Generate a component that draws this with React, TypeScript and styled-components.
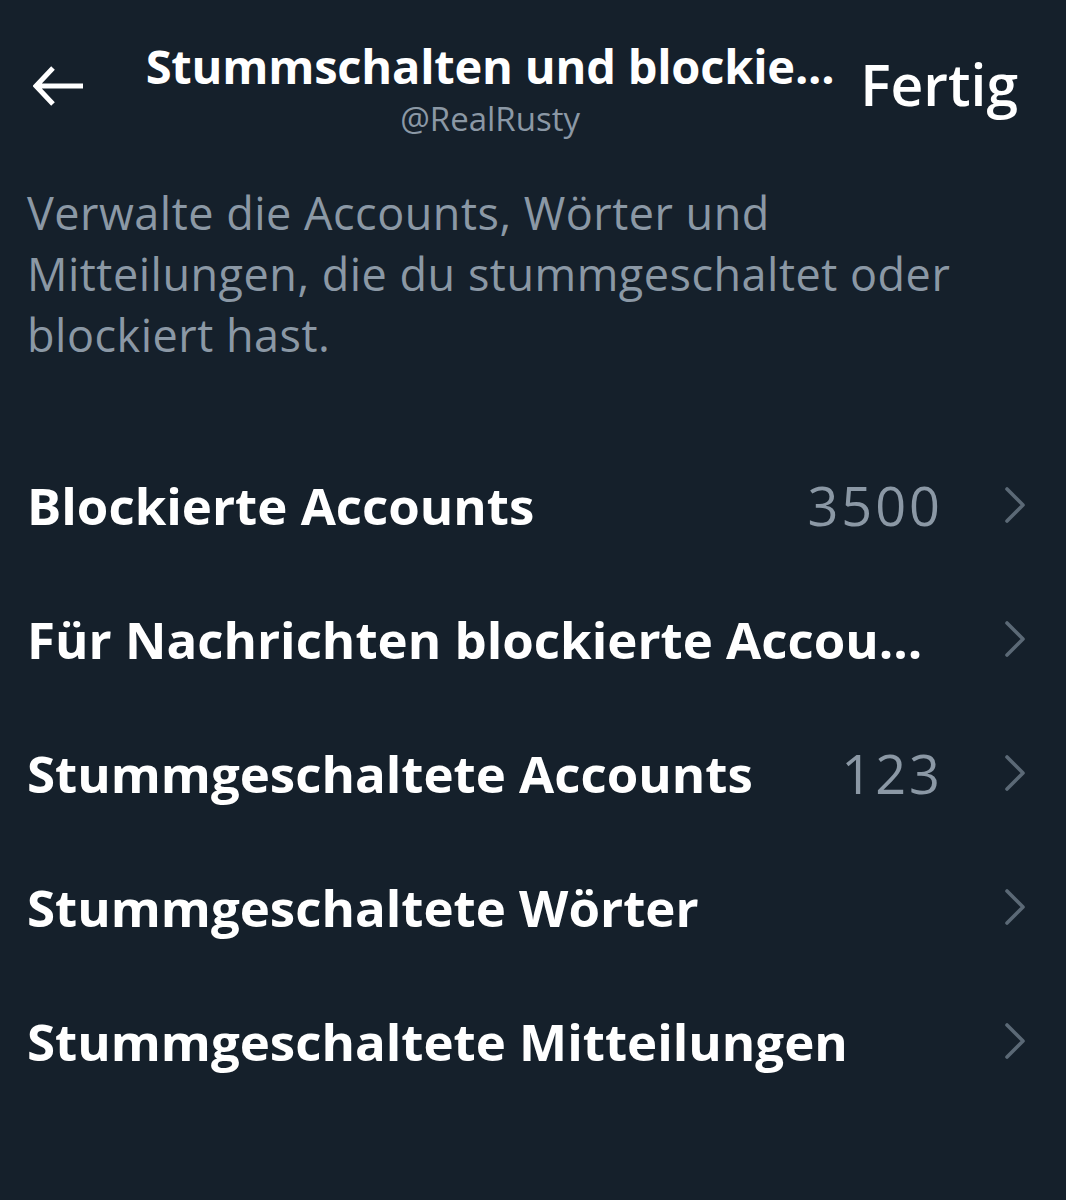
import styled, { createGlobalStyle } from 'styled-components';

const GlobalStyle = createGlobalStyle`
    html, body {
        margin: 0;
        background: #15202b;
    }
    body {
        font-family: "Open Sans", "Noto Sans", sans-serif;
        -webkit-font-smoothing: antialiased;
    }
`;

const Page = styled.div`
    width: 1066px;
    min-height: 1200px;
    background: #15202b;
    color: #ffffff;
`;

const Header = styled.header`
    display: flex;
    align-items: center;
    height: 150px;
    padding: 0 48px 0 33px;
    box-sizing: border-box;
`;

const BackButton = styled.button`
    display: flex;
    align-items: center;
    flex: none;
    width: 114px;
    height: 60px;
    padding: 0;
    margin-top: 22px;
    background: none;
    border: 0;
    color: #ffffff;
`;

const TitleBlock = styled.div`
    flex: 1;
    display: flex;
    flex-direction: column;
    align-items: center;
    gap: 8px;
    min-width: 0;
    margin-top: 28px;
`;

const Title = styled.h1`
    margin: 0;
    font-size: 47px;
    font-weight: 700;
    line-height: 52px;
    letter-spacing: -0.2px;
    white-space: nowrap;
`;

const Handle = styled.div`
    font-size: 33px;
    line-height: 38px;
    color: #8b98a5;
`;

const DoneButton = styled.button`
    flex: none;
    padding: 0;
    margin-top: 18px;
    margin-left: 27px;
    background: none;
    border: 0;
    color: #ffffff;
    font-family: "Open Sans", "Noto Sans", sans-serif;
    font-size: 57px;
    font-weight: 600;
    line-height: 60px;
`;

const Description = styled.p`
    margin: 32px 0 0;
    padding: 0 60px 0 27px;
    font-size: 45px;
    line-height: 61px;
    letter-spacing: 0.5px;
    color: #8b98a5;
`;

const List = styled.ul`
    list-style: none;
    margin: 73px 0 0;
    padding: 0;
`;

const Row = styled.li`
    display: flex;
    align-items: center;
    height: 134px;
    padding: 0 40px 0 27px;
`;

const Label = styled.span`
    flex: 1;
    font-size: 51px;
    font-weight: 700;
    white-space: nowrap;
`;

const Count = styled.span`
    margin-right: 61px;
    font-size: 54px;
    letter-spacing: 3px;
    color: #8b98a5;
`;

const Chevron = styled.svg`
    flex: none;
`;

const ChevronIcon = () => (
    <Chevron width="22" height="36" viewBox="0 0 22 36">
        <polyline points="3,2 19,18 3,34" fill="none" stroke="#5b6976" strokeWidth="3.6" strokeLinecap="round" strokeLinejoin="round" />
    </Chevron>
);

const rows = [
    { label: 'Blockierte Accounts', count: '3500' },
    { label: 'Für Nachrichten blockierte Accou...' },
    { label: 'Stummgeschaltete Accounts', count: '123' },
    { label: 'Stummgeschaltete Wörter' },
    { label: 'Stummgeschaltete Mitteilungen' },
];

const App = () => {
    return (
        <Page>
            <GlobalStyle />
            <Header>
                <BackButton aria-label="Zurück">
                    <svg width="52" height="42" viewBox="0 0 52 42">
                        <path d="M50 21H4M20 3L3 21l17 18" fill="none" stroke="currentColor" strokeWidth="5" strokeLinejoin="miter" />
                    </svg>
                </BackButton>
                <TitleBlock>
                    <Title>Stummschalten und blockie...</Title>
                    <Handle>@RealRusty</Handle>
                </TitleBlock>
                <DoneButton>Fertig</DoneButton>
            </Header>
            <Description>
                Verwalte die Accounts, Wörter und Mitteilungen, die du stummgeschaltet oder blockiert hast.
            </Description>
            <List>
                {rows.map((row) => (
                    <Row key={row.label}>
                        <Label>{row.label}</Label>
                        {row.count && <Count>{row.count}</Count>}
                        <ChevronIcon />
                    </Row>
                ))}
            </List>
        </Page>
    );
};

export default App;
